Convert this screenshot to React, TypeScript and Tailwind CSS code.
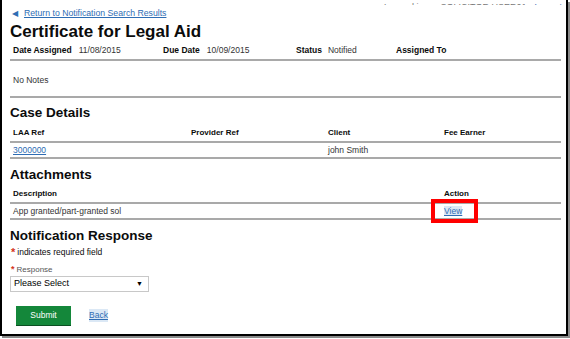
import React from "react";

const font = { fontFamily: '"Liberation Sans", Arial, sans-serif' };

function Rule() {
  return <div className="h-[2px] w-full bg-[#a9a9a9]" />;
}

export default function App() {
  return (
    <div className="h-[339px] w-[570px] bg-white" style={font}>
      <div className="h-[336px] w-[568px] border-x-2 border-b-2 border-black bg-white shadow-[2px_2px_0_#8a8a8a]">
        {/* user bar, cropped by the top edge of the capture */}
        <div className="flex h-[5px] items-end justify-end gap-2 overflow-hidden pr-[4px]">
          <span className="translate-y-[8px] text-[9px] leading-[11px] text-[#777]">Logged in as: SOLICITOR.USER01</span>
          <span className="translate-y-[8px] text-[9px] leading-[11px] text-[#2e6db4]">Logout</span>
        </div>

        <div className="pl-[8px] pr-[5px]">
          <div className="flex h-[17px] items-center gap-[6px] pl-[2px]">
            <span className="text-[7.5px] text-[#2e6db4]">◀</span>
            <a className="text-[8.7px] text-[#2e6db4] underline">Return to Notification Search Results</a>
          </div>

          <div className="flex h-[19px] items-center">
            <h1 className="text-[17px] font-bold leading-none text-[#0b0c0c]">Certificate for Legal Aid</h1>
          </div>

          <div className="grid h-[18px] grid-cols-[150px_133px_100px_1fr] items-center pl-[3px] text-[8.5px] text-[#0b0c0c]">
            <div className="flex gap-[7px]">
              <span className="font-bold">Date Assigned</span>
              <span className="text-[#333]">11/08/2015</span>
            </div>
            <div className="flex gap-[7px]">
              <span className="font-bold">Due Date</span>
              <span className="text-[#333]">10/09/2015</span>
            </div>
            <div className="flex gap-[6px]">
              <span className="font-bold">Status</span>
              <span className="text-[#333]">Notified</span>
            </div>
            <span className="font-bold">Assigned To</span>
          </div>
          <Rule />

          <div className="flex h-[35px] items-center pl-[3px] pt-[3px] text-[8.5px] text-[#333]">No Notes</div>
          <Rule />

          <h2 className="flex h-[26px] items-center pt-[4px] text-[13.5px] font-bold text-[#0b0c0c]">Case Details</h2>
          <div className="grid h-[17px] grid-cols-[178px_137px_116px_1fr] items-center pl-[3px] text-[8px] font-bold text-[#0b0c0c]">
            <span>LAA Ref</span>
            <span>Provider Ref</span>
            <span>Client</span>
            <span>Fee Earner</span>
          </div>
          <Rule />
          <div className="grid h-[14px] grid-cols-[178px_137px_116px_1fr] items-center pl-[3px] text-[8.5px] text-[#333]">
            <a className="text-[#2e6db4] underline">3000000</a>
            <span></span>
            <span>john Smith</span>
            <span></span>
          </div>
          <Rule />

          <h2 className="flex h-[26px] items-center pt-[7px] text-[13.5px] font-bold text-[#0b0c0c]">Attachments</h2>
          <div className="grid h-[17px] grid-cols-[431px_1fr] items-center pl-[3px] text-[8px] font-bold text-[#0b0c0c]">
            <span>Description</span>
            <span>Action</span>
          </div>
          <Rule />
          <div className="grid h-[14px] grid-cols-[431px_1fr] items-center pl-[3px] text-[8.5px] text-[#333]">
            <span>App granted/part-granted sol</span>
            <div className="relative">
              <a className="bg-[#dbe8f5] text-[#2e6db4] underline">View</a>
              <div className="pointer-events-none absolute left-[-13px] top-[-6px] h-[24px] w-[47px] border-[4px] border-[#ff0000]" />
            </div>
          </div>
          <Rule />

          <h2 className="flex h-[26px] items-center pt-[7px] text-[13.5px] font-bold text-[#0b0c0c]">Notification Response</h2>
          <div className="flex h-[13px] items-center gap-[2px] pl-[1px] text-[8.5px] text-[#0b0c0c]">
            <span className="text-[11px] font-bold leading-none text-[#d4351c]">*</span>
            <span>indicates required field</span>
          </div>
          <div className="flex h-[17px] items-center gap-[2px] pl-[1px] pt-[4px] text-[8px] text-[#555]">
            <span className="text-[9px] font-bold leading-none text-[#d4351c]">*</span>
            <span>Response</span>
          </div>
          <div className="flex h-[16px] w-[139px] items-center justify-between border border-[#c8c8c8] pl-[3px] pr-[5px] text-[9px] text-black">
            <span>Please Select</span>
            <span className="text-[7px]">▼</span>
          </div>

          <div className="mt-[14px] flex items-center gap-[18px] pl-[6px]">
            <button className="flex h-[19px] w-[55px] items-center justify-center bg-[#14873a] text-[8.5px] text-white shadow-[0_1px_0_#0b4f22]">
              Submit
            </button>
            <a className="bg-[#dbe8f5] text-[8.5px] text-[#2e6db4] underline">Back</a>
          </div>
        </div>
      </div>
    </div>
  );
}
